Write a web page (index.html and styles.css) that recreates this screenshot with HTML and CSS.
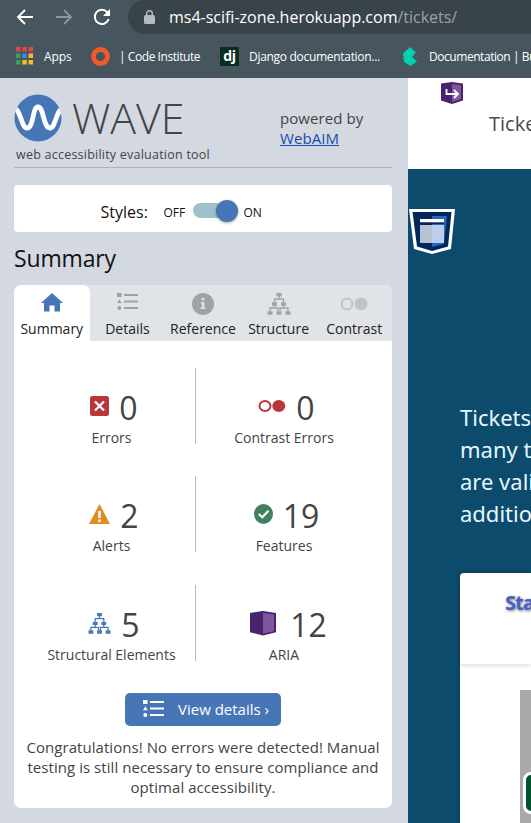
FILE: index.html
```html
<!DOCTYPE html>
<html lang="en">
<head>
<meta charset="utf-8">
<title>WAVE</title>
<link rel="stylesheet" href="styles.css">
</head>
<body>
<svg class="defs" width="0" height="0">
  <symbol id="tree" viewBox="0 0 24 22"><path fill="currentColor" d="M9.500 0h5v3.500h-5zM5 9.200h5v3.500H5zM14 9.200h5v3.500h-5zM.5 18.200h5v3.500h-5zM9.500 18.200h5v3.500h-5zM18.500 18.200h5v3.500h-5z"/><path fill="none" stroke="currentColor" stroke-width="1.300" d="M12 3v3M7.500 9V6h9v3M7.500 12v3M16.500 12v3M3 18v-3h8v3M21 18v-3h-8v3"/></symbol>
  <symbol id="list" viewBox="0 0 21 17"><path fill="currentColor" d="M0 0h4.500v4H0zM2.300 6.200 4.800 10.300H-.1zM7 1h14v2H7zM7 7.500h14v2H7zM7 14h14v2H7z"/><circle cx="2.300" cy="15" r="2" fill="currentColor"/></symbol>
</svg>
<header class="browser">
  <div class="toolbar">
    <svg class="back" width="18" height="18" viewBox="0 0 18 18" fill="none" stroke="#fff" stroke-width="1.900"><path d="M17 9H2M9 2 2 9l7 7"/></svg>
    <svg class="forward" width="18" height="18" viewBox="0 0 18 18" fill="none" stroke="#8b979d" stroke-width="1.800"><path d="M1 9h15M9 2l7 7-7 7"/></svg>
    <svg class="reload" width="18" height="18" viewBox="0 0 18 18"><path d="M14.300 4.300A7.100 7.100 0 1 0 15.700 11" fill="none" stroke="#fff" stroke-width="2"/><path d="M17 1v7h-7z" fill="#fff"/></svg>
    <div class="address">
      <svg width="11" height="14" viewBox="0 0 11 14"><rect y="5" width="11" height="9" rx="1.500" fill="#b6bbbf"/><path d="M2.700 6V3.500a2.800 2.800 0 0 1 5.600 0V6" fill="none" stroke="#b6bbbf" stroke-width="1.400"/></svg>
      <span class="url">ms4-scifi-zone.herokuapp.com<span>/tickets/</span></span>
    </div>
  </div>
  <nav class="bookmarks">
    <a class="bm apps"><svg width="17" height="18" viewBox="0 0 17 18"><path fill="#e24848" d="M0 0h4.500v4.500H0zM6.300 0h4.500v4.500H6.300zM12.500 0H17v4.500h-4.500z"/><path fill="#35a35a" d="M0 6.500h4.500V11H0zM0 13h4.500v4.500H0z"/><path fill="#3989ec" d="M6.300 6.500h4.500V11H6.300z"/><path fill="#f5bd2a" d="M12.500 6.500H17V11h-4.500zM6.300 13h4.500v4.500H6.300zM12.500 13H17v4.500h-4.500z"/></svg><span>Apps</span></a>
    <a class="bm code"><svg width="19" height="19" viewBox="0 0 19 19"><circle cx="9.500" cy="9.500" r="7" fill="none" stroke="#f15a29" stroke-width="4.800"/></svg><span>| Code Institute</span></a>
    <a class="bm django"><i>dj</i><span>Django documentation...</span></a>
    <a class="bm bulma"><svg width="14" height="19" viewBox="0 0 13 19" preserveAspectRatio="none"><path fill="#00d1b2" d="M6.500 0 12 5.500 8.500 10l4.500 4.500L7 19l-6-4L0 6.500z"/></svg><span>Documentation | Bu</span></a>
  </nav>
</header>
<div class="content">
  <aside class="wave">
    <div class="brand">
      <div class="logo">
        <div class="mark">
          <svg width="48" height="48" viewBox="0 0 48 48"><defs><clipPath id="disc"><circle cx="24" cy="24" r="23.500"/></clipPath></defs><circle cx="24" cy="24" r="23.500" fill="#4776b6"/><path clip-path="url(#disc)" d="M-1 14C7 14 7 34 13 34c7 0 5-21 11-21s5 21 12 21c6 0 6-20 14-20" fill="none" stroke="#fff" stroke-width="4.800"/></svg>
          <span>WAVE</span>
        </div>
        <p>web accessibility evaluation tool</p>
      </div>
      <div class="powered">powered by<br><a>WebAIM</a></div>
    </div>
    <div class="styles"><b>Styles:</b><span class="off">OFF</span><i class="switch"></i><span>ON</span></div>
    <h1>Summary</h1>
    <section class="panel">
      <nav class="tabs">
        <a class="tab active"><svg width="22" height="19" viewBox="0 0 22 19"><path fill="currentColor" d="M11 0 22 10h-3v8.500h-5.500v-6h-5v6H3V10H0z"/></svg><span>Summary</span></a>
        <a class="tab"><svg width="21" height="17"><use href="#list"/></svg><span>Details</span></a>
        <a class="tab"><svg width="22" height="22" viewBox="0 0 22 22"><circle cx="11" cy="11" r="11" fill="currentColor"/><path fill="#e0e3e8" d="M9.700 5h2.600v2.600H9.700zM8.800 9h3.500v5.500h1.200V16h-5v-1.500h1.300v-4h-1z"/></svg><span>Reference</span></a>
        <a class="tab"><svg width="24" height="22"><use href="#tree"/></svg><span>Structure</span></a>
        <a class="tab pale"><svg width="28" height="22" viewBox="0 0 28 22"><circle cx="7" cy="11" r="5.500" fill="none" stroke="currentColor" stroke-width="2"/><circle cx="21" cy="11" r="6.500" fill="currentColor"/></svg><span>Contrast</span></a>
      </nav>
      <div class="stats">
        <div class="stat"><div class="count"><svg width="19" height="20" viewBox="0 0 19 20"><rect width="19" height="20" rx="2.500" fill="#b7373a"/><path d="m5 5.500 9 9m0-9-9 9" stroke="#fff" stroke-width="2.200"/></svg><b>0</b></div><p>Errors</p></div>
        <div class="stat"><div class="count"><svg width="28" height="20" viewBox="0 0 28 20"><ellipse cx="7" cy="10" rx="5.500" ry="5" fill="none" stroke="#b7373a" stroke-width="2"/><ellipse cx="20.800" cy="10" rx="6.500" ry="6" fill="#b7373a"/></svg><b>0</b></div><p>Contrast Errors</p></div>
        <div class="stat"><div class="count"><svg width="21" height="20" viewBox="0 0 21 20"><path d="M10.500 0 21 20H0z" fill="#df8d20"/><path d="M9.200 7h2.600v7H9.200zM9.200 15.500h2.600V18H9.200z" fill="#fff"/></svg><b>2</b></div><p>Alerts</p></div>
        <div class="stat"><div class="count"><svg width="19" height="20" viewBox="0 0 19 20"><ellipse cx="9.500" cy="10" rx="9.500" ry="10" fill="#43805f"/><path d="m4.800 10 3.500 3.300 6.200-6.500" fill="none" stroke="#fff" stroke-width="2"/></svg><b>19</b></div><p>Features</p></div>
        <div class="stat"><div class="count"><svg class="blue" width="23" height="21"><use href="#tree"/></svg><b>5</b></div><p>Structural Elements</p></div>
        <div class="stat"><div class="count aria"><svg width="26" height="25" viewBox="0 0 26 26" preserveAspectRatio="none"><path d="M0 2 13 0l13 2v20l-13 3.500L0 22z" fill="#48246c"/><path d="m13 2 11 1.500V21l-11 2.500z" fill="#8055a0"/></svg><b>12</b></div><p>ARIA</p></div>
      </div>
      <a class="button"><svg width="21" height="17"><use href="#list"/></svg><span>View details ›</span></a>
      <p class="result">Congratulations! No errors were detected! Manual<br>testing is still necessary to ensure compliance and<br>optimal accessibility.</p>
    </section>
  </aside>
  <main class="site">
    <div class="sitebar">
      <svg width="24" height="23" viewBox="0 0 24 23"><path d="M1 1.500 12 0l11 1.500v17L12 22 1 18.500z" fill="#48246c"/><path d="m12 2 9 1.200V17l-9 3z" fill="#8055a0"/><path d="M6.500 7v5H18M14 8l4 4-4 4" fill="none" stroke="#fff" stroke-width="1.800"/></svg>
      <span>Tickets</span>
    </div>
    <svg class="nav-badge" width="47" height="47" viewBox="0 0 47 47"><path d="M1 1h46l-4 40-19 5-18-5z" fill="#fff"/><path d="M4.500 4h39L40 38.500 24 43 9 38.500z" fill="#03265b"/><path d="M24 8h15l-3 28-12 3z" fill="#2467bd"/><path d="M12 11h24v3.500H12z" fill="#fff"/><path d="M12 17h12v18H12z" fill="#b8c1d1"/><path d="M24 17h12v18H24z" fill="#bdd0eb"/><path d="M12 14.500h24v1.500H12z" fill="#03265b"/></svg>
    <p class="intro">Tickets<br>many t<br>are vali<br>additio</p>
    <div class="card">
      <h2>Sta</h2>
      <div class="card-body"><div class="picture"><i></i></div></div>
    </div>
  </main>
</div>
</body>
</html>
```
FILE: styles.css
```css
* { box-sizing: border-box; }
body { margin: 0; width: 531px; height: 823px; overflow: hidden; font-family: "Open Sans", sans-serif; color: #444; background: #d4d8e0; }
p, h1, h2 { margin: 0; font-weight: 400; }
b, i { font-weight: 400; font-style: normal; }
svg { display: block; flex: none; }
.defs { position: absolute; }

.browser { height: 78px; background: #46555e; color: #fff; overflow: hidden; }
.toolbar { height: 34px; display: flex; align-items: center; padding-left: 16px; }
.forward { margin-left: 21px; }
.reload { margin-left: 20px; }
.address { flex: 1; height: 34px; margin-left: 17px; padding-left: 16px; background: #38434a; border-radius: 17px 0 0 17px; display: flex; align-items: center; gap: 14px; white-space: nowrap; }
.url { font: 16px/22px "Open Sans", sans-serif; letter-spacing: -0.01px; }
.url span { color: #9aa2a7; }
.bookmarks { display: flex; height: 44px; padding-left: 16px; font-size: 12px; letter-spacing: -0.3px; white-space: nowrap; }
.bm { display: flex; align-items: center; flex: none; }
.apps { width: 75px; gap: 11px; letter-spacing: -0.1px; }
.code { width: 129px; gap: 9px; letter-spacing: -0.44px; }
.django { width: 183px; gap: 10px; }
.bulma { gap: 12px; letter-spacing: -0.45px; }
.django i { width: 19px; height: 19px; background: #092e20; font: 700 14px/17px "Open Sans", sans-serif; text-align: center; }

.content { display: flex; height: 745px; }
.wave { width: 408px; flex: none; padding: 0 16px 0 14px; background: #d4d8e0; }
.brand { display: flex; height: 90px; border-bottom: 1px solid #adb3c0; }
.logo { width: 266px; padding-top: 16px; }
.mark { display: flex; height: 48px; align-items: center; gap: 10px; }
.mark span { font-size: 43px; line-height: 48px; font-weight: 300; letter-spacing: -0.1px; }
.logo p { padding: 4px 0 0 2px; font-size: 12.5px; line-height: 18px; white-space: nowrap; letter-spacing: 0.23px; }
.powered { padding-top: 30px; font-size: 15px; line-height: 20px; white-space: nowrap; letter-spacing: 0.08px; }
.powered a { color: #174cb3; text-decoration: underline; }
.styles { margin-top: 17px; height: 47px; background: #fff; border-radius: 4px; padding: 7px 0 0 86.500px; display: flex; align-items: center; color: #111; font-size: 12px; }
.styles b { width: 63px; font-size: 16px; }
.off { width: 29px; }
.switch { width: 45px; height: 15px; margin: -3px 6px 0 0; border-radius: 8px; background: #9ec1cb; display: flex; align-items: center; justify-content: flex-end; }
.switch::after { content: ""; width: 22px; height: 22px; border-radius: 50%; background: #4776b6; box-shadow: 0 1px 3px #0005; }
h1 { margin-top: 10px; height: 43px; font-size: 23px; line-height: 32px; letter-spacing: -0.15px; color: #111; }
.panel { height: 523px; background: #fff; border-radius: 7px; overflow: hidden; }
.tabs { display: flex; height: 56px; background: #e0e3e8; }
.tab { width: 75.6px; flex: none; display: flex; flex-direction: column; align-items: center; padding-top: 8px; color: #a0a3a5; }
.tab svg { margin-bottom: auto; }
.tab span { height: 23px; font-size: 14px; line-height: 21px; color: #222; }
.tab.active { background: #fff; border-radius: 7px 7px 0 0; color: #4776b6; }
.tab.pale { color: #c1c3c6; }
.stats { display: grid; grid-template-columns: 182px 196px; grid-template-rows: 108px 109px 108px; padding-top: 27px; height: 352px; }
.stat { height: 76px; padding-top: 21px; text-align: center; }
.stat:nth-child(odd) { border-right: 1px solid #bbb; padding-left: 14px; }
.stat:nth-child(even) { padding-right: 20px; }
.count { display: flex; justify-content: center; align-items: center; height: 38px; gap: 10px; padding-left: 5px; }
.count.aria { gap: 14px; padding-left: 9px; }
.count svg { margin-top: -4px; }
.blue { color: #4776b6; }
.count b { font-size: 32px; line-height: 38px; margin-top: -1px; font-weight: 400; }
.stat p { font-size: 14px; line-height: 22px; white-space: nowrap; }
.button { display: flex; align-items: center; width: 156px; height: 33px; margin: 0 auto; border-radius: 5px; background: #4776b6; color: #fff; padding: 0 0 2px 18px; gap: 14px; font-size: 15px; white-space: nowrap; }
.result { margin-top: 11px; font-size: 15px; line-height: 20px; letter-spacing: 0.05px; text-align: center; white-space: nowrap; }

.site { width: 123px; flex: none; background: #0c4b6c; overflow: hidden; white-space: nowrap; }
.sitebar { height: 91px; background: #fff; padding: 4px 0 0 32px; }
.sitebar span { display: block; padding: 5px 0 0 49px; font-size: 20px; line-height: 28px; color: #4a4a4a; font-weight: 400; }
.nav-badge { margin-top: 39px; }
.intro { padding: 146px 0 0 52px; height: 318px; font: 22px/32px "Noto Sans", sans-serif; color: #e4f7ff; }
.card { margin-left: 52px; height: 260px; background: #fff; border-radius: 4px 0 0 0; box-shadow: 0 0 6px #0003; }
.card h2 { height: 91px; padding: 17px 0 0 45px; font: 700 20px/26px "Noto Sans", sans-serif; letter-spacing: -1px; color: #485fc7; text-shadow: 1px 1px 3px #777; box-shadow: 0 2px 4px #0002; }
.card-body { padding: 26px 0 0 60px; }
.picture { height: 160px; background: #a9a9a9; padding: 82px 0 0 3px; }
.picture i { display: block; width: 45px; height: 42px; border: 3px solid #fff; border-radius: 8px; background: #00552e; }
```
